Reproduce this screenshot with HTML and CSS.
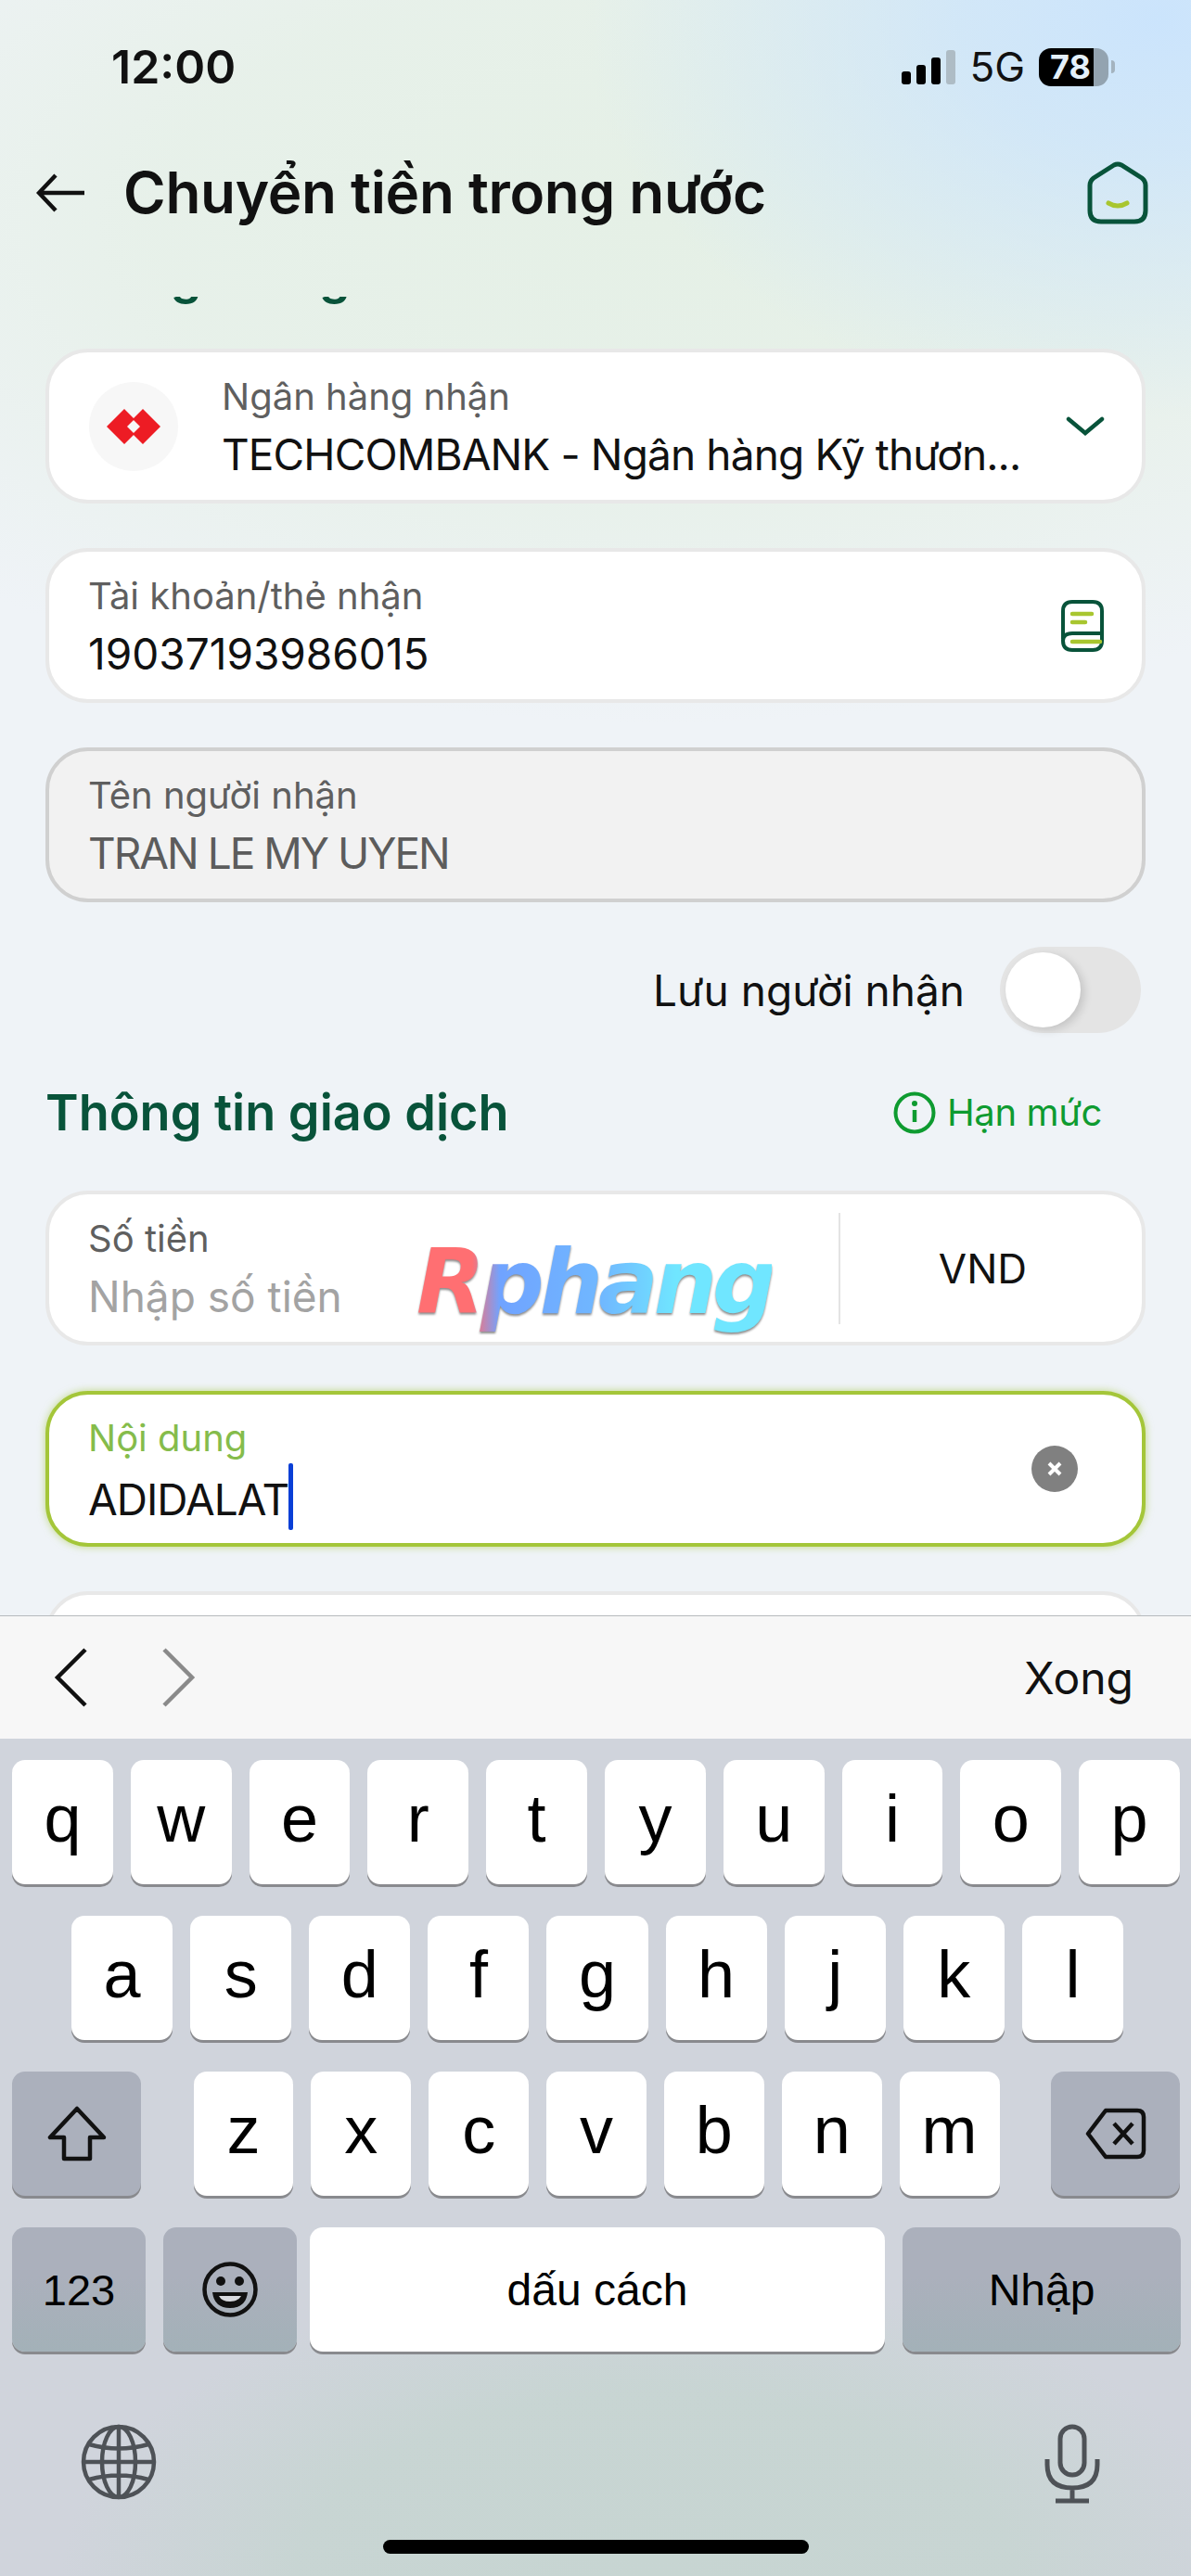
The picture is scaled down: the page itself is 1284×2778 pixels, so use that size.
FILE: index.html
```html
<!DOCTYPE html>
<html lang="vi">
<head>
    <meta charset="UTF-8">
    <meta name="viewport" content="width=device-width, initial-scale=1.0">
    <title>Chuyển tiền trong nước</title>
    <link rel="stylesheet" href="styles.css">
</head>
<body>
    <div class="status_bar">
        <span class="clock">12:00</span>
        <div class="status_icons">
            <div class="signal">
                <i class="bar1"></i><i class="bar2"></i><i class="bar3"></i><i class="bar4"></i>
            </div>
            <span class="net">5G</span>
            <div class="battery"><span>78</span></div>
            <i class="battery_nub"></i>
        </div>
    </div>

    <div class="top_bar">
        <svg class="back" width="54" height="42" viewBox="0 0 54 42"><path d="M52 21H4M21 2 3 21l18 19" fill="none" stroke="#111" stroke-width="4.5"/></svg>
        <span class="page_title">Chuyển tiền trong nước</span>
        <svg class="home" width="66" height="68" viewBox="0 0 66 68"><path d="M29 4 7 18q-4 3-4 8v27q0 12 12 12h36q12 0 12-12V26q0-5-4-8L37 4q-4-2-8 0Z" fill="none" stroke="#08533a" stroke-width="5"/><path d="M23 45q10 6 20 0" fill="none" stroke="#a8c62f" stroke-width="5" stroke-linecap="round"/></svg>
    </div>

    <div class="scroll_area">
        <div class="section_title clipped">Thông tin người</div>

        <div class="card">
            <div class="bank_logo">
                <svg width="58" height="40" viewBox="0 0 58 40"><path d="M19 1 0 20l19 19 11-11-8-8 8-8ZM39 1 28 12l8 8-8 8 11 11 19-19Z" fill="#ed1c24"/></svg>
            </div>
            <div class="field bank_field">
                <span class="field_label">Ngân hàng nhận</span>
                <span class="field_value bank_name">TECHCOMBANK - Ngân hàng Kỹ thươn...</span>
            </div>
            <svg class="chevron" width="42" height="22" viewBox="0 0 42 22"><path d="m3 3 18 15L39 3" fill="none" stroke="#08533a" stroke-width="4.5" stroke-linecap="round"/></svg>
        </div>

        <div class="card">
            <div class="field">
                <span class="field_label">Tài khoản/thẻ nhận</span>
                <span class="field_value">19037193986015</span>
            </div>
            <svg class="book" width="46" height="56" viewBox="0 0 46 56"><path d="M2 42V12Q2 2 12 2h22q10 0 10 10v32q0 10-10 10H12Q2 54 2 44q0-8 10-8h32" fill="none" stroke="#08533a" stroke-width="4"/><path d="M12 15h21M12 24h14M12 45h30" fill="none" stroke="#a8c62f" stroke-width="4.5" stroke-linecap="round"/></svg>
        </div>

        <div class="card disabled">
            <div class="field">
                <span class="field_label">Tên người nhận</span>
                <span class="field_value caps">TRAN LE MY UYEN</span>
            </div>
        </div>

        <div class="save_row">
            <span>Lưu người nhận</span>
            <div class="toggle"><i></i></div>
        </div>

        <div class="section_row">
            <div class="section_title">Thông tin giao dịch</div>
            <div class="limit">
                <svg width="46" height="46" viewBox="0 0 46 46"><circle cx="23" cy="23" r="20.5" fill="none" stroke="#0e9b30" stroke-width="4"/><path d="M23 20v13" stroke="#0e9b30" stroke-width="4.5"/><circle cx="23" cy="13" r="3" fill="#0e9b30"/></svg>
                <span>Hạn mức</span>
            </div>
        </div>

        <div class="card amount">
            <div class="field">
                <span class="field_label">Số tiền</span>
                <span class="field_value placeholder">Nhập số tiền</span>
            </div>
            <div class="currency">VND</div>
            <div class="watermark">Rphang</div>
        </div>

        <div class="card focused">
            <div class="field">
                <span class="field_label">Nội dung</span>
                <span class="field_value caps_tight">ADIDALAT<i class="caret"></i></span>
            </div>
            <div class="clear_btn">
                <svg width="20" height="20" viewBox="0 0 20 20"><path d="m4 4 12 12M16 4 4 16" stroke="#fff" stroke-width="4"/></svg>
            </div>
        </div>

        <div class="card"></div>
    </div>

    <div class="input_bar">
        <svg width="40" height="64" viewBox="0 0 40 64"><path d="M35 2 5 32l30 30" fill="none" stroke="#111" stroke-width="4.5"/></svg>
        <svg class="next" width="40" height="64" viewBox="0 0 40 64"><path d="m5 2 30 30L5 62" fill="none" stroke="#8a8a8a" stroke-width="4.5"/></svg>
        <span class="done">Xong</span>
    </div>

    <div class="keyboard">
        <div class="kb_row">
            <div class="key">q</div><div class="key">w</div><div class="key">e</div><div class="key">r</div><div class="key">t</div><div class="key">y</div><div class="key">u</div><div class="key">i</div><div class="key">o</div><div class="key">p</div>
        </div>
        <div class="kb_row row2">
            <div class="key">a</div><div class="key">s</div><div class="key">d</div><div class="key">f</div><div class="key">g</div><div class="key">h</div><div class="key">j</div><div class="key">k</div><div class="key">l</div>
        </div>
        <div class="kb_row row3">
            <div class="key dark shift">
                <svg width="64" height="60" viewBox="0 0 64 60"><path d="M32 3 3 34h15v23h28V34h15Z" fill="none" stroke="#111" stroke-width="4.5" stroke-linejoin="round"/></svg>
            </div>
            <div class="letters">
                <div class="key">z</div><div class="key">x</div><div class="key">c</div><div class="key">v</div><div class="key">b</div><div class="key">n</div><div class="key">m</div>
            </div>
            <div class="key dark shift">
                <svg width="66" height="56" viewBox="0 0 66 56"><path d="M22 3h34q7 0 7 7v36q0 7-7 7H22L3 28Z" fill="none" stroke="#111" stroke-width="4.5" stroke-linejoin="round"/><path d="m31 17 20 22M51 17 31 39" stroke="#111" stroke-width="4.5"/></svg>
            </div>
        </div>
        <div class="kb_row row4">
            <div class="key dark num">123</div>
            <div class="key dark emoji">
                <svg width="62" height="62" viewBox="0 0 62 62"><circle cx="31" cy="31" r="27.5" fill="none" stroke="#111" stroke-width="4.5"/><circle cx="21" cy="22" r="5" fill="#111"/><circle cx="41" cy="22" r="5" fill="#111"/><path d="M12 34h38q-2 17-19 17T12 34Z" fill="#111"/><path d="M19 38h24q-3 6-12 6t-12-6Z" fill="#d8dadf"/></svg>
            </div>
            <div class="key space">dấu cách</div>
            <div class="key dark enter">Nhập</div>
        </div>
        <div class="kb_bottom">
            <svg width="82" height="82" viewBox="0 0 82 82"><g fill="none" stroke="#4e5257" stroke-width="4.5"><circle cx="41" cy="41" r="38"/><ellipse cx="41" cy="41" rx="18" ry="38"/><path d="M41 3v76M3 41h76M9 22q32 9 64 0M9 60q32-9 64 0"/></g></svg>
            <svg width="60" height="86" viewBox="0 0 60 86"><g fill="none" stroke="#4e5257" stroke-width="5"><rect x="17" y="3" width="26" height="52" rx="13"/><path d="M3 38v6q0 25 27 25t27-25v-6M30 69v14M12 83h36"/></g></svg>
        </div>
        <div class="home_indicator"></div>
    </div>
</body>
</html>
```

FILE: styles.css
```css
* {
    box-sizing: border-box;
}
html, body {
    margin: 0;
    padding: 0;
}
body {
    width: 1284px;
    height: 2778px;
    overflow: hidden;
    display: flex;
    flex-direction: column;
    font-family: "Inter", "Noto Sans", sans-serif;
    color: #111;
    background-color: #eff3f7;
    background-image:
        radial-gradient(ellipse 620px 430px at 1250px 20px, #cbe4fc 0%, rgba(203,228,252,0.75) 35%, rgba(203,228,252,0) 100%),
        radial-gradient(ellipse 1100px 540px at 720px 240px, #e5f0e6 0%, rgba(229,240,230,0.8) 50%, rgba(229,240,230,0) 100%);
    background-repeat: no-repeat;
}

/* status bar */
.status_bar {
    height: 140px;
    flex: none;
    display: flex;
    justify-content: space-between;
    padding: 40px 82px 0 120px;
}
.clock {
    font-size: 50px;
    font-weight: 600;
    line-height: 64px;
}
.status_icons {
    display: flex;
    align-items: center;
    height: 64px;
}
.signal {
    display: flex;
    align-items: flex-end;
    gap: 6px;
    height: 38px;
}
.signal i {
    display: block;
    width: 10px;
    background: #000;
    border-radius: 3px;
}
.bar1 { height: 14px; }
.bar2 { height: 21px; }
.bar3 { height: 29px; }
.signal .bar4 { height: 37px; background: #aebcc5; }
.net {
    font-size: 44px;
    margin-left: 15px;
    line-height: 64px;
}
.battery {
    margin-left: 15px;
    width: 75px;
    height: 41px;
    border-radius: 13px;
    background: linear-gradient(90deg, #000 59px, #93a3b0 59px);
    padding-left: 12px;
}
.battery span {
    font-size: 36px;
    font-weight: 700;
    line-height: 41px;
    color: #e4f0fa;
    display: block;
}
.battery_nub {
    width: 4px;
    height: 14px;
    margin-left: 3px;
    background: #a4b3bf;
    border-radius: 0 7px 7px 0;
}

/* title bar */
.top_bar {
    height: 180px;
    flex: none;
    display: flex;
    align-items: flex-start;
    padding: 34px 46px 0 39px;
}
.back {
    margin-top: 13px;
    flex: none;
}
.page_title {
    font-size: 62px;
    font-weight: 600;
    line-height: 68px;
    letter-spacing: -0.3px;
    margin-left: 40px;
    flex: 1;
    white-space: nowrap;
}
.home {
    flex: none;
}

/* form */
.scroll_area {
    flex: 1;
    min-height: 0;
    overflow: hidden;
    padding: 0 49px;
    display: flex;
    flex-direction: column;
    gap: 48px;
}
.section_title {
    font-size: 54px;
    font-weight: 600;
    line-height: 64px;
    color: #08533a;
    white-space: nowrap;
}
.clipped {
    flex: none;
    margin-top: -55px;
    margin-bottom: -1px;
}
.card {
    flex: none;
    position: relative;
    height: 167px;
    display: flex;
    align-items: center;
    padding: 0 44px 0 42px;
    background: #fff;
    border: 4px solid #e8e8e8;
    border-radius: 46px;
}
.field {
    flex: 1;
    min-width: 0;
    display: flex;
    flex-direction: column;
}
.field_label {
    font-size: 40px;
    line-height: 60px;
    color: #5f5f5f;
    white-space: nowrap;
}
.field_value {
    font-size: 46px;
    line-height: 64px;
    white-space: nowrap;
}
.bank_name {
    letter-spacing: -0.86px;
}
.caps {
    letter-spacing: -2px;
}
.caps_tight {
    letter-spacing: -1px;
}
.bank_logo {
    width: 96px;
    height: 96px;
    flex: none;
    margin-left: 1px;
    border-radius: 50%;
    background: #f7f7f7;
    display: flex;
    align-items: center;
    justify-content: center;
}
.bank_field {
    margin-left: 47px;
}
.chevron {
    flex: none;
    margin-right: -4px;
}
.book {
    flex: none;
    margin-right: -3px;
}
.disabled {
    background: #f2f2f2;
    border-color: #d0d0d0;
}
.disabled .field_value {
    color: #5c5c5c;
}
.save_row {
    flex: none;
    height: 93px;
    display: flex;
    align-items: center;
    justify-content: flex-end;
    padding-right: 5px;
    gap: 38px;
    font-size: 46px;
}
.toggle {
    width: 152px;
    height: 93px;
    border-radius: 47px;
    background: #e4e4e4;
    padding: 6px;
}
.toggle i {
    display: block;
    width: 81px;
    height: 81px;
    border-radius: 50%;
    background: #fff;
    box-shadow: 4px 3px 10px rgba(0, 0, 0, 0.14);
}
.section_row {
    flex: none;
    display: flex;
    align-items: center;
    justify-content: space-between;
    height: 83px;
    margin-top: -4px;
    margin-bottom: -5px;
    padding-right: 47px;
}
.limit {
    display: flex;
    align-items: center;
    gap: 12px;
    font-size: 40px;
    letter-spacing: -0.4px;
    color: #0e9b30;
}
.placeholder {
    color: #a3a3a3;
}
.currency {
    flex: none;
    width: 327px;
    margin-right: -44px;
    padding-right: 18px;
    border-left: 2px solid #e4e4e4;
    height: 120px;
    display: flex;
    align-items: center;
    justify-content: center;
    font-size: 44px;
}
.watermark {
    position: absolute;
    left: 396px;
    top: 40px;
    font-family: "DejaVu Sans", sans-serif;
    font-size: 96px;
    font-weight: 700;
    font-style: italic;
    line-height: 110px;
    letter-spacing: -5px;
    color: transparent;
    background: linear-gradient(90deg, #ff6f72 0, #ff6f72 60px, #70a3ff 90px, #70b8ff 200px, #70e6ff 280px);
    -webkit-background-clip: text;
    background-clip: text;
    filter: drop-shadow(0 2px 1px rgba(90, 90, 90, 0.7));
}
.focused {
    height: 168px;
    margin-top: 1px;
    border-color: #a4c639;
    box-shadow: 0 0 8px rgba(164, 198, 57, 0.6);
}
.focused .field_label {
    color: #85bc4b;
    margin-top: 6px;
    line-height: 54px;
}
.caret {
    display: inline-block;
    width: 5px;
    height: 72px;
    background: #0a3fd6;
    vertical-align: -16px;
    margin-left: 0;
    border-radius: 2px;
}
.clear_btn {
    width: 50px;
    height: 50px;
    flex: none;
    margin-right: 25px;
    border-radius: 50%;
    background: #808080;
    display: flex;
    align-items: center;
    justify-content: center;
}

/* keyboard toolbar */
.input_bar {
    height: 133px;
    flex: none;
    display: flex;
    align-items: center;
    padding: 0 62px 0 57px;
    background: #f7f7f7;
    border-top: 1px solid #b6babd;
    position: relative;
}
.next {
    margin-left: 75px;
}
.done {
    margin-left: auto;
    font-size: 48px;
}

/* keyboard */
.keyboard {
    height: 903px;
    flex: none;
    padding: 23px 12px 0 13px;
    display: flex;
    flex-direction: column;
    gap: 31px;
    position: relative;
    background-color: #d0d4dc;
    background-image: radial-gradient(ellipse 640px 330px at 55% 100%, #c7d5d2 0%, rgba(199,213,210,0.9) 60%, rgba(199,213,210,0) 100%);
    background-repeat: no-repeat;
}
.kb_row {
    display: flex;
    gap: 19px;
    height: 137px;
    flex: none;
}
.key {
    flex: 1;
    height: 134px;
    display: flex;
    align-items: center;
    justify-content: center;
    background: #fff;
    border-radius: 14px;
    box-shadow: 0 3px 0 #898a8e;
    font-family: "Liberation Sans", sans-serif;
    font-size: 72px;
    padding-bottom: 8px;
    color: #000;
}
.row2 {
    padding: 0 61px 0 64px;
}
.row3 {
    justify-content: space-between;
}
.letters {
    display: flex;
    gap: 19px;
    width: 869px;
    flex: none;
    margin-left: 1px;
}
.dark {
    background: #abb0bc;
}
.shift {
    flex: none;
    width: 139px;
    padding-bottom: 0;
}
.row4 .key {
    flex: none;
    font-size: 48px;
    padding-bottom: 0;
}
.row4 .dark {
    background: linear-gradient(180deg, #abb0bc 40%, #a3b1b8 100%);
}
.row4 .num {
    width: 144px;
    font-size: 47px;
}
.row4 .emoji {
    width: 144px;
}
.row4 .space {
    width: 620px;
    margin-left: -5px;
}
.row4 .enter {
    width: 300px;
}
.kb_bottom {
    display: flex;
    justify-content: space-between;
    padding: 44px 86px 0 74px;
}
.home_indicator {
    position: absolute;
    left: 413px;
    bottom: 24px;
    width: 459px;
    height: 15px;
    border-radius: 8px;
    background: #000;
}
```
